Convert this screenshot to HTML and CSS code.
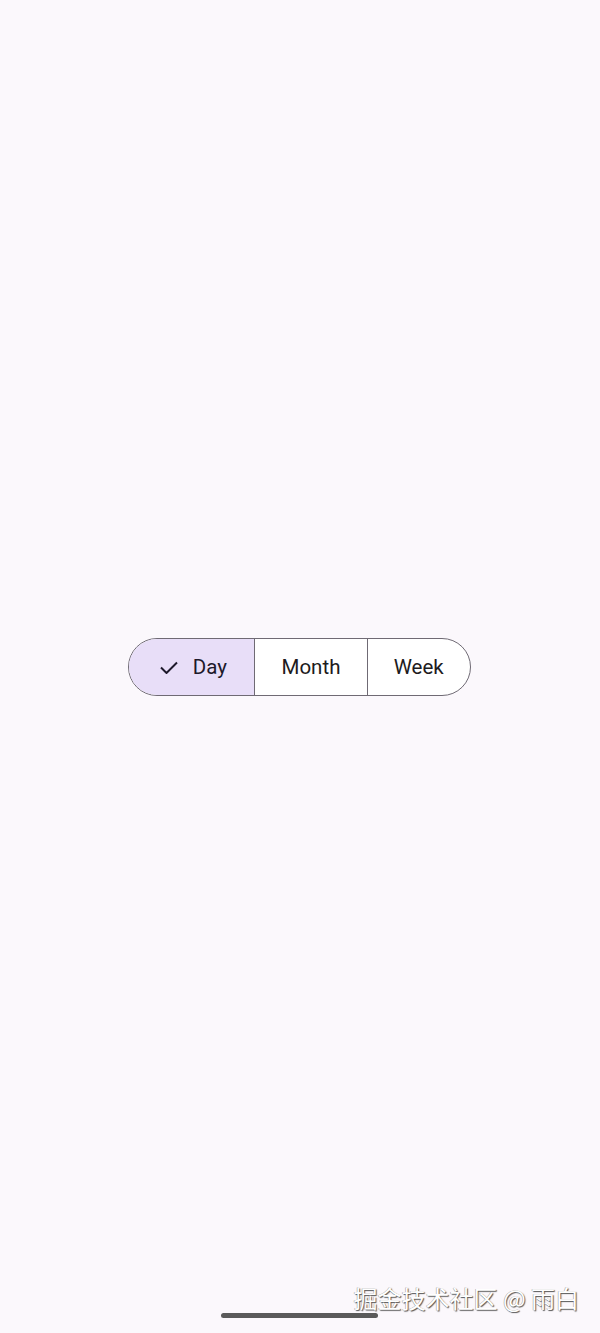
FILE: index.html
```html
<!DOCTYPE html>
<html lang="en">
<head>
<meta charset="utf-8">
<title>Segmented button</title>
<link rel="stylesheet" href="styles.css">
</head>
<body>
<main class="screen">
  <div class="segmented" role="group">
    <button class="segment segment-day selected">
      <svg class="check" width="18" height="13" viewBox="0 0 18 13" aria-hidden="true">
        <polyline points="1,6.5 6.5,12 17,1.5" fill="none" stroke="#1d192b" stroke-width="2"/>
      </svg>
      <span>Day</span>
    </button>
    <button class="segment segment-month">Month</button>
    <button class="segment segment-week">Week</button>
  </div>
  <div class="watermark">掘金技术社区 @ 雨白</div>
  <div class="home-indicator"></div>
</main>
</body>
</html>
```
FILE: styles.css
```css
html, body {
  margin: 0;
  padding: 0;
  background: #fbf8fc;
}
.screen {
  position: relative;
  height: 1333px;
  display: flex;
  align-items: center;
  justify-content: center;
  font-family: Roboto, "Noto Sans", sans-serif;
}
.segmented {
  display: flex;
  height: 58px;
  box-sizing: border-box;
  border: 1.5px solid #6f6a74;
  border-radius: 999px;
  overflow: hidden;
  background: #ffffff;
  margin-left: -1px;
}
.segment {
  display: flex;
  align-items: center;
  justify-content: center;
  gap: 15px;
  border: 0;
  background: transparent;
  font-family: Roboto, "Noto Sans", sans-serif;
  font-weight: 400;
  font-size: 20.5px;
  color: #1d1b20;
  padding: 0;
  margin: 0;
  height: 100%;
  box-sizing: border-box;
}
.segment + .segment {
  border-left: 1.5px solid #6f6a74;
}
.segment-day {
  width: 125px;
  padding-left: 3px;
}
.segment-month {
  width: 112.5px;
}
.segment-week {
  width: 103px;
}
.segment.selected {
  background: #e8def8;
  color: #1d192b;
}
.check {
  display: block;
  margin-top: 1px;
}
.watermark {
  position: absolute;
  right: 21px;
  top: 1282px;
  font-family: "Noto Sans CJK SC", sans-serif;
  font-size: 24px;
  line-height: 32px;
  color: #ffffff;
  text-shadow: 1px 1px 1px #555555, -0.5px -0.5px 0.5px #999999;
}
.home-indicator {
  position: absolute;
  left: 221px;
  top: 1313px;
  width: 157px;
  height: 5px;
  border-radius: 3px;
  background: #5a5a5a;
}
```
